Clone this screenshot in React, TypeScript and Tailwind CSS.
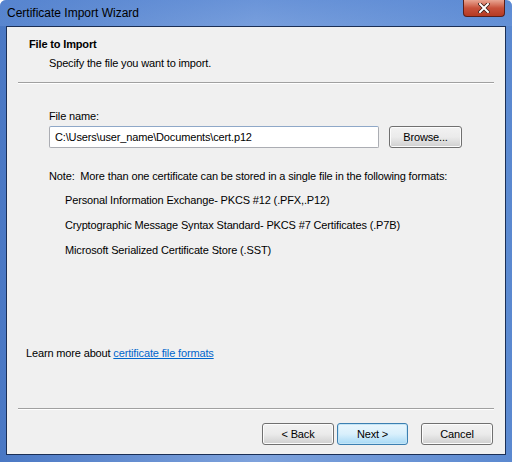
import { useState } from 'react';

const formats = [
  'Personal Information Exchange- PKCS #12 (.PFX,.P12)',
  'Cryptographic Message Syntax Standard- PKCS #7 Certificates (.P7B)',
  'Microsoft Serialized Certificate Store (.SST)',
];

function WinButton({ label, focused = false, width = 'w-[72px]' }: { label: string; focused?: boolean; width?: string }) {
  return (
    <button
      className={`h-[22px] ${width} rounded-[3px] border text-[11px] leading-[15px] text-black ${
        focused
          ? 'border-[#3c7fb1] bg-gradient-to-b from-[#eaf6fd] via-[#d9f0fc] to-[#a7d9f5] shadow-[inset_0_0_0_1px_#c4e5f6]'
          : 'border-[#707070] bg-gradient-to-b from-[#f2f2f2] via-[#ebebeb] to-[#cfcfcf] shadow-[inset_0_0_0_1px_#fcfcfc]'
      }`}
    >
      {label}
    </button>
  );
}

export default function App() {
  const [fileName, setFileName] = useState('C:\\Users\\user_name\\Documents\\cert.p12');

  return (
    <div
      className="flex h-[462px] w-[512px] flex-col overflow-hidden rounded-t-[6px] bg-gradient-to-r from-[#4a78c4] via-[#7ea2dc] to-[#5b89d0] text-black"
      style={{ fontFamily: '"Liberation Sans", Arial, sans-serif' }}
    >
      {/* Title bar */}
      <div className="relative flex h-[26px] shrink-0 items-center pl-[7px] bg-gradient-to-b from-[#5d8bd6]/60 to-[#6f9ade]/40">
        <span className="text-[12px] text-black">Certificate Import Wizard</span>
        <div className="absolute right-[7px] top-0 flex h-[17px] w-[42px] items-center justify-center rounded-b-[4px] border border-t-0 border-[#5a1f1a] bg-gradient-to-b from-[#e8a593] via-[#c8513b] to-[#b53a22]">
          <svg width="12" height="10" viewBox="0 0 12 10">
            <path d="M2 1 L10 9 M10 1 L2 9" stroke="#3b1c16" strokeWidth="3.6" strokeLinecap="square" />
            <path d="M2 1 L10 9 M10 1 L2 9" stroke="#ffffff" strokeWidth="2" strokeLinecap="square" />
          </svg>
        </div>
      </div>

      {/* Client area */}
      <div className="mx-[6px] flex flex-1 flex-col border border-[#1b2f55] bg-[#f0f0f0] text-[11px] leading-[15px] tracking-[-0.15px]">
        {/* Header */}
        <div className="px-[22px] pt-[10px]">
          <div className="font-bold">File to Import</div>
          <div className="mt-[4px] pl-[20px]">Specify the file you want to import.</div>
        </div>
        <div className="mx-[11px] mt-[11px] border-t border-b border-t-[#a0a0a0] border-b-white" />

        {/* Body */}
        <div className="flex flex-1 flex-col px-[42px] pt-[25px]">
          <div>File name:</div>
          <div className="mt-[2px] flex items-center gap-[10px]">
            <input
              value={fileName}
              onChange={(e) => setFileName(e.target.value)}
              className="h-[22px] w-[330px] rounded-[2px] border border-[#abadb3] border-t-[#8fa8c8] bg-white px-[5px] text-[11px] tracking-[-0.15px] outline-none"
            />
            <WinButton label="Browse..." width="w-[73px]" />
          </div>

          <div className="mt-[21px]">Note:&nbsp; More than one certificate can be stored in a single file in the following formats:</div>
          <div className="mt-[9px] flex flex-col gap-[10px] pl-[16px]">
            {formats.map((f) => (
              <div key={f}>{f}</div>
            ))}
          </div>

          <div className="mt-auto -ml-[23px] pb-[47px]">
            Learn more about <a className="text-[#0066cc] underline">certificate file formats</a>
          </div>
        </div>

        {/* Footer */}
        <div className="mx-[11px] border-t border-b border-t-[#a0a0a0] border-b-white" />
        <div className="flex justify-end px-[12px] pt-[13px] pb-[9px]">
          <div className="flex gap-[3px]">
            <WinButton label="< Back" />
            <WinButton label="Next >" focused width="w-[71px]" />
          </div>
          <div className="ml-[13px]">
            <WinButton label="Cancel" />
          </div>
        </div>
      </div>
      <div className="h-[7px] shrink-0" />
    </div>
  );
}
